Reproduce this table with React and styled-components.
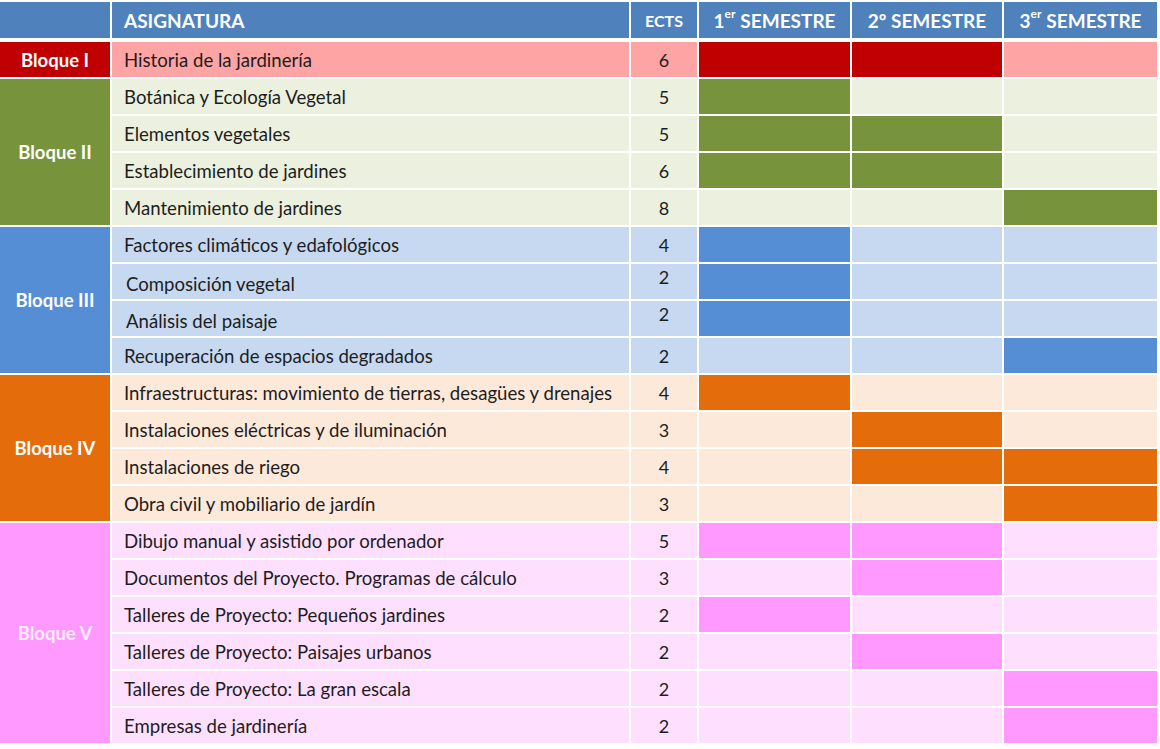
import React from "react";
import styled, { createGlobalStyle } from "styled-components";

const Global = createGlobalStyle`
  html, body { margin: 0; padding: 0; background: #ffffff; }
  body { font-family: Lato, "Open Sans", sans-serif; }
`;

const COLS = "110px 517px 66px 151px 150px 153px";

const Page = styled.div`
  width: 1160px;
  height: 749px;
  padding-top: 2px;
  box-sizing: border-box;
  background: #fff;
`;

const HeaderRow = styled.div`
  display: grid;
  grid-template-columns: ${COLS};
  column-gap: 2px;
  height: 36px;
  margin-bottom: 4px;
`;

const HeadCell = styled.div`
  background: #4f81bd;
  color: #ffffff;
  font-weight: 700;
  font-size: ${(p) => (p.$small ? "16px" : "19px")};
  display: flex;
  align-items: center;
  justify-content: ${(p) => (p.$left ? "flex-start" : "center")};
  padding-left: ${(p) => (p.$left ? "12px" : "0")};
  white-space: nowrap;
`;

const Sup = styled.span`
  font-size: 12px;
  position: relative;
  top: -7px;
  margin-right: 5px;
`;

const Body = styled.div`
  display: grid;
  grid-template-columns: ${COLS};
  grid-auto-rows: 35px;
  gap: 2px;
`;

const BlockCell = styled.div`
  grid-column: 1;
  grid-row: span ${(p) => p.$span};
  background: ${(p) => p.$bg};
  color: ${(p) => p.$fg};
  font-weight: 700;
  font-size: 18.5px;
  display: flex;
  align-items: center;
  justify-content: center;
`;

const SubjectCell = styled.div`
  background: ${(p) => p.$bg};
  color: #1d1d1d;
  font-size: 18.6px;
  display: flex;
  align-items: center;
  padding-left: ${(p) => (p.$nudge ? "14px" : "12px")};
  padding-top: ${(p) => (p.$nudge ? "4px" : "0")};
  white-space: nowrap;
`;

const EctsCell = styled.div`
  background: ${(p) => p.$bg};
  color: #1d1d1d;
  font-size: 18px;
  display: flex;
  align-items: center;
  justify-content: center;
  padding-bottom: ${(p) => (p.$nudge ? "9px" : "0")};
`;

const SemCell = styled.div`
  background: ${(p) => (p.$on ? p.$dark : p.$light)};
`;

const BLOCKS = [
  {
    name: "Bloque I",
    dark: "#c00000",
    light: "#fea4a4",
    fg: "#ffffff",
    rows: [["Historia de la jardinería", 6, [1, 2]]],
  },
  {
    name: "Bloque II",
    dark: "#77933c",
    light: "#ebf1de",
    fg: "#ffffff",
    rows: [
      ["Botánica y Ecología Vegetal", 5, [1]],
      ["Elementos vegetales", 5, [1, 2]],
      ["Establecimiento de jardines", 6, [1, 2]],
      ["Mantenimiento de jardines", 8, [3]],
    ],
  },
  {
    name: "Bloque III",
    dark: "#558ed5",
    light: "#c6d9f1",
    fg: "#ffffff",
    rows: [
      ["Factores climáticos y edafológicos", 4, [1]],
      ["Composición vegetal", 2, [1], true],
      ["Análisis del paisaje", 2, [1], true],
      ["Recuperación de espacios degradados", 2, [3]],
    ],
  },
  {
    name: "Bloque IV",
    dark: "#e46c0a",
    light: "#fde9d9",
    fg: "#ffffff",
    rows: [
      ["Infraestructuras: movimiento de tierras, desagües y drenajes", 4, [1]],
      ["Instalaciones eléctricas y de iluminación", 3, [2]],
      ["Instalaciones de riego", 4, [2, 3]],
      ["Obra civil y mobiliario de jardín", 3, [3]],
    ],
  },
  {
    name: "Bloque V",
    dark: "#ff99ff",
    light: "#fee0fe",
    fg: "#ffeaff",
    rows: [
      ["Dibujo manual y asistido por ordenador", 5, [1, 2]],
      ["Documentos del Proyecto. Programas de cálculo", 3, [2]],
      ["Talleres de Proyecto: Pequeños jardines", 2, [1]],
      ["Talleres de Proyecto: Paisajes urbanos", 2, [2]],
      ["Talleres de Proyecto: La gran escala", 2, [3]],
      ["Empresas de jardinería", 2, [3]],
    ],
  },
];

export default function App() {
  return (
    <>
      <Global />
      <Page>
        <HeaderRow>
          <HeadCell />
          <HeadCell $left>ASIGNATURA</HeadCell>
          <HeadCell $small>ECTS</HeadCell>
          <HeadCell>
            1<Sup>er</Sup>SEMESTRE
          </HeadCell>
          <HeadCell>2º SEMESTRE</HeadCell>
          <HeadCell>
            3<Sup>er</Sup>SEMESTRE
          </HeadCell>
        </HeaderRow>
        <Body>
          {BLOCKS.map((b) => (
            <React.Fragment key={b.name}>
              <BlockCell $span={b.rows.length} $bg={b.dark} $fg={b.fg}>
                {b.name}
              </BlockCell>
              {b.rows.map(([subject, ects, sems, nudge]) => (
                <React.Fragment key={subject}>
                  <SubjectCell $bg={b.light} $nudge={nudge}>
                    {subject}
                  </SubjectCell>
                  <EctsCell $bg={b.light} $nudge={nudge}>
                    {ects}
                  </EctsCell>
                  {[1, 2, 3].map((s) => (
                    <SemCell
                      key={s}
                      $on={sems.includes(s)}
                      $dark={b.dark}
                      $light={b.light}
                    />
                  ))}
                </React.Fragment>
              ))}
            </React.Fragment>
          ))}
        </Body>
      </Page>
    </>
  );
}
